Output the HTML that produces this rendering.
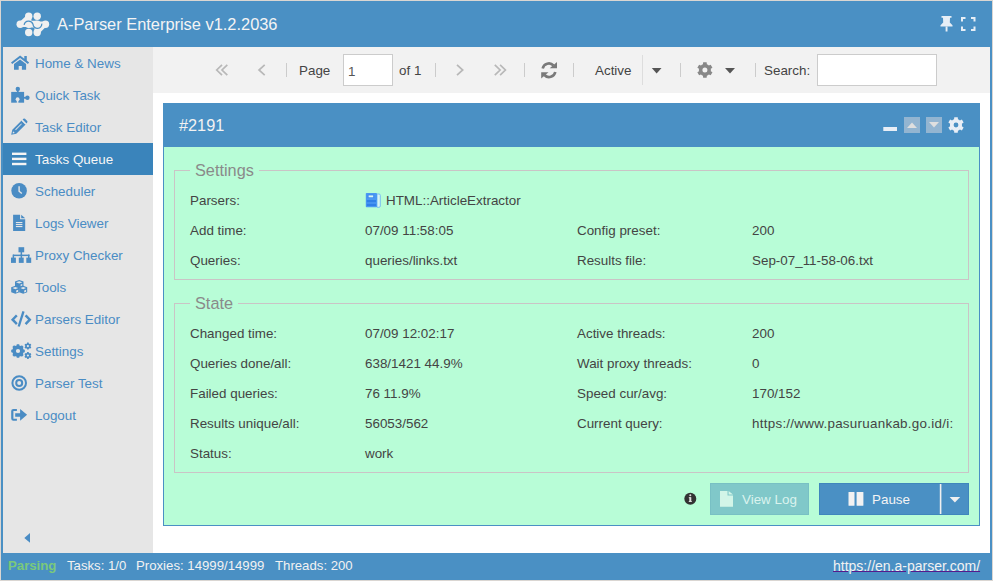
<!DOCTYPE html>
<html><head><meta charset="utf-8">
<style>
*{margin:0;padding:0;box-sizing:border-box}
html,body{width:993px;height:581px;overflow:hidden;background:#dad6d2;font-family:"Liberation Sans",sans-serif;}
.abs{position:absolute}
#win{position:absolute;left:1px;top:1px;width:991px;height:579px;background:#4a90c4;overflow:hidden}
#hdr{position:absolute;left:0;top:0;width:991px;height:46px;background:#4a90c4}
#title{position:absolute;left:56px;top:13px;font-size:16.4px;line-height:20px;color:#f4f4f4;white-space:nowrap}
#side{position:absolute;left:2px;top:46px;width:150px;height:506px;background:#e6e6e6}
.it{position:absolute;left:0;width:150px;height:32px;font-size:13.4px;line-height:32px;color:#4a8cc4;white-space:nowrap}
.it span{position:absolute;left:32px;top:1px}
.it svg{position:absolute}
.it.act{background:#3a84bb;color:#f6f6f6}
#main{position:absolute;left:152px;top:46px;width:837px;height:506px;background:#fff}
#tb{position:absolute;left:0;top:0;width:837px;height:46px;background:#f2f2f2}
.tt{position:absolute;font-size:13.4px;line-height:20px;color:#444;white-space:nowrap}
.sep{position:absolute;width:1px;background:#cfcfcf}
.inp{position:absolute;background:#fff;border:1px solid #cccccc}
#panel{position:absolute;left:10px;top:56px;width:817px;height:423px;background:#b8fdd7;border:1px solid #4a90c4;border-top:none}
#ph{position:absolute;left:-1px;top:0;width:817px;height:44px;background:#4a90c4}
#ph .num{position:absolute;left:16px;top:12px;font-size:16.3px;line-height:20px;color:#f2f2f2}
.fs{position:absolute;border:1px solid #cac4c6}
.lg{position:absolute;font-size:16.3px;line-height:20px;color:#8a8a8a;background:#b8fdd7;padding:0 5px;white-space:nowrap}
.btn{position:absolute}
.btn span{position:absolute;top:6px;font-size:13.4px;line-height:20px;white-space:nowrap}
.r{position:absolute;font-size:13.4px;line-height:30px;color:#444;white-space:nowrap}
#status{position:absolute;left:0;top:552px;width:991px;height:27px;background:#4a90c4}
.st{position:absolute;top:-1px;font-size:13.2px;line-height:27px;color:#f2f2f2;white-space:nowrap}
</style></head><body>
<div id="win">
  <div id="hdr">
        <div id="title">A-Parser Enterprise v1.2.2036</div>
  </div>
  <div id="side">
    <div class="it" style="top:0"><span>Home &amp; News</span></div>
    <div class="it" style="top:32px"><span>Quick Task</span></div>
    <div class="it" style="top:64px"><span>Task Editor</span></div>
    <div class="it act" style="top:96px"><span>Tasks Queue</span></div>
    <div class="it" style="top:128px"><span>Scheduler</span></div>
    <div class="it" style="top:160px"><span>Logs Viewer</span></div>
    <div class="it" style="top:192px"><span>Proxy Checker</span></div>
    <div class="it" style="top:224px"><span>Tools</span></div>
    <div class="it" style="top:256px"><span>Parsers Editor</span></div>
    <div class="it" style="top:288px"><span>Settings</span></div>
    <div class="it" style="top:320px"><span>Parser Test</span></div>
    <div class="it" style="top:352px"><span>Logout</span></div>
  </div>
  <div id="main">
    <div id="tb">
      <div class="tt" style="left:146px;top:14px">Page</div>
      <div class="inp" style="left:190px;top:7px;width:50px;height:32px"></div>
      <div class="tt" style="left:195px;top:15px;color:#555">1</div>
      <div class="tt" style="left:246px;top:14px">of 1</div>
      <div class="tt" style="left:442px;top:14px">Active</div>
      <div class="tt" style="left:611px;top:14px">Search:</div>
      <div class="inp" style="left:664px;top:7px;width:120px;height:32px"></div>
    </div>
    <div id="panel">
      <div id="ph"><div class="num">#2191</div></div>
      <div class="fs" style="left:10px;top:67px;width:795px;height:110px"></div>
      <div class="lg" style="left:26px;top:57px">Settings</div>
      <div class="r" style="left:26px;top:83px">Parsers:</div>
      <div class="r" style="left:222px;top:83px">HTML::ArticleExtractor</div>
      <div class="r" style="left:26px;top:113px">Add time:</div>
      <div class="r" style="left:201px;top:113px">07/09 11:58:05</div>
      <div class="r" style="left:413px;top:113px">Config preset:</div>
      <div class="r" style="left:588px;top:113px">200</div>
      <div class="r" style="left:26px;top:143px">Queries:</div>
      <div class="r" style="left:201px;top:143px">queries/links.txt</div>
      <div class="r" style="left:413px;top:143px">Results file:</div>
      <div class="r" style="left:588px;top:143px">Sep-07_11-58-06.txt</div>

      <div class="fs" style="left:10px;top:200px;width:795px;height:170px"></div>
      <div class="lg" style="left:26px;top:190px">State</div>
      <div class="r" style="left:26px;top:216px">Changed time:</div>
      <div class="r" style="left:201px;top:216px">07/09 12:02:17</div>
      <div class="r" style="left:413px;top:216px">Active threads:</div>
      <div class="r" style="left:588px;top:216px">200</div>
      <div class="r" style="left:26px;top:246px">Queries done/all:</div>
      <div class="r" style="left:201px;top:246px">638/1421 44.9%</div>
      <div class="r" style="left:413px;top:246px">Wait proxy threads:</div>
      <div class="r" style="left:588px;top:246px">0</div>
      <div class="r" style="left:26px;top:276px">Failed queries:</div>
      <div class="r" style="left:201px;top:276px">76 11.9%</div>
      <div class="r" style="left:413px;top:276px">Speed cur/avg:</div>
      <div class="r" style="left:588px;top:276px">170/152</div>
      <div class="r" style="left:26px;top:306px">Results unique/all:</div>
      <div class="r" style="left:201px;top:306px">56053/562</div>
      <div class="r" style="left:413px;top:306px">Current query:</div>
      <div class="r" style="left:588px;top:306px;width:201px;overflow:hidden;letter-spacing:0.27px">https://www.pasuruankab.go.id/i:</div>
      <div class="r" style="left:26px;top:336px">Status:</div>
      <div class="r" style="left:201px;top:336px">work</div>
      <div class="btn" style="left:546px;top:380px;width:99px;height:32px;background:#80c8c9;color:#daf3ee;border:1px solid #78c0c4"><span style="left:31px">View Log</span></div>
      <div class="btn" style="left:655px;top:380px;width:150px;height:32px;background:#4a90c4;color:#f4f4f4;border:1px solid #3f86bd"><span style="left:52px">Pause</span></div>
    </div>
  </div>
  <div id="status">
    <div class="st" style="left:7px;color:#7bc97b;font-weight:bold">Parsing</div>
    <div class="st" style="left:66px">Tasks: 1/0</div>
    <div class="st" style="left:135px">Proxies: 14999/14999</div>
    <div class="st" style="left:274px">Threads: 200</div>
    <div class="st" style="left:832px;top:0;font-size:14px;text-decoration:underline;text-decoration-color:#551a8b;text-underline-offset:0px">https://en.a-parser.com/</div>
  </div>
</div>
<svg id="ov" style="position:absolute;left:0;top:0;pointer-events:none" width="993" height="581" viewBox="0 0 993 581">
<!-- logo -->
<g fill="#f0f0f0" stroke="none">
<circle cx="28.7" cy="16.2" r="3.7"/><circle cx="37.2" cy="16.2" r="3.7"/>
<circle cx="20.2" cy="24.2" r="3.7"/><circle cx="28.7" cy="24.2" r="3.7"/><circle cx="37.2" cy="24.2" r="3.7"/><circle cx="45.5" cy="24.2" r="3.7"/>
<circle cx="28.7" cy="32.5" r="3.7"/><circle cx="37.2" cy="32.5" r="3.7"/>
</g>
<g stroke="#f0f0f0" fill="none" stroke-linecap="round" stroke-linejoin="round">
<path d="M28.7 16.2 L20.2 24.2 M45.5 24.2 L37.2 32.5" stroke-width="4.2"/>
<path d="M20.2 24.2 L45.5 24.2" stroke-width="5.4"/>
<path d="M28.7 16.2 L28.7 24.2 M37.2 24.2 L37.2 32.5" stroke-width="5.4"/>
</g>
<path d="M28.7 16.2 L20.2 24.2 L28.7 24.2Z M37.2 24.2 L45.5 24.2 L37.2 32.5Z M28.7 20.8 H37.2 V27.6 H28.7Z" fill="#f0f0f0"/>
<path d="M24.1 24.8 A4.6 4.6 0 0 1 33 24.2 A4.4 4.4 0 0 0 41.8 23.6" stroke="#4a90c4" stroke-width="1.25" fill="none"/>
<!-- pin -->
<g fill="#e6eef6">
<path d="M941.5 16 H951.5 V17.8 H950 L949.8 22.5 L952.5 25.2 V26.6 H940.5 V25.2 L943.2 22.5 L943 17.8 H941.5Z"/>
<rect x="945.6" y="26.5" width="1.9" height="5"/>
</g>
<g fill="none" stroke="#e6eef6" stroke-width="2">
<path d="M962 21.5 V18 H965.5 M971 18 H974.5 V21.5 M974.5 26.5 V30 H971 M965.5 30 H962 V26.5"/>
</g>
<!-- sidebar icons -->
<g fill="#4a8cc4">
<!-- home -->
<path d="M11 62.4 L20.1 55.6 L24.3 58.7 V56 H26.8 V60.6 L29.1 62.4 L27.9 63.9 L20.1 58.1 L12.2 63.9Z"/>
<path d="M14 64 L20.1 59.6 L26.1 64 V69.8 H21.9 V66 H18.7 V69.8 H14Z"/>
<!-- puzzle -->
<rect x="11.2" y="91.9" width="12.9" height="10.8"/>
<circle cx="17.8" cy="88.9" r="2.2"/><rect x="16.9" y="89" width="1.8" height="3.2"/>
<circle cx="27.4" cy="97.8" r="2.2"/><rect x="23.9" y="96.9" width="3.2" height="1.8"/>
<circle cx="17.6" cy="99.2" r="1.9" fill="#e6e6e6"/><rect x="16.8" y="99.5" width="1.6" height="3.4" fill="#e6e6e6"/>
<!-- pencil -->
<path d="M11.2 134.8 L12.3 129.8 L21.6 120.5 L25.6 124.5 L16.3 133.8Z M22.6 119.5 L23.4 118.8 Q24.2 118.2 25 118.8 L27.2 121 Q27.8 121.8 27.2 122.6 L26.5 123.4Z"/>
<!-- clock -->
<circle cx="19.1" cy="190.7" r="7.8"/>
<!-- file -->
<path d="M13.1 214.8 H20.1 V219.3 H25.2 V230.9 H13.1Z M21.2 214.8 L25.2 218.3 H21.2Z"/>
<!-- sitemap -->
<rect x="18.5" y="247.2" width="5.7" height="5.1"/>
<rect x="20.6" y="252" width="1.5" height="3.5"/>
<rect x="13" y="254.6" width="16.5" height="1.5"/>
<rect x="12.6" y="254.6" width="1.5" height="3.5"/><rect x="20.6" y="254.6" width="1.5" height="3.5"/><rect x="28" y="254.6" width="1.5" height="3.5"/>
<rect x="11" y="257.6" width="4.9" height="5.3"/><rect x="18.8" y="257.6" width="4.9" height="5.3"/><rect x="26.3" y="257.6" width="4.9" height="5.3"/>
<!-- cubes -->
<path d="M15 281.5 L19.2 280 L23.5 281.5 V286.5 L19.2 288 L15 286.5Z"/>
<path d="M11.2 287.3 L15.3 285.8 L19.5 287.3 V292.3 L15.3 293.8 L11.2 292.3Z"/>
<path d="M19.2 287.3 L23.2 285.8 L27.2 287.3 V292.3 L23.2 293.8 L19.2 292.3Z"/>
<!-- code -->
<path d="M16 316.2 L12.6 319.7 L16 323.2 M26.4 316.2 L29.8 319.7 L26.4 323.2" stroke="#4a8cc4" stroke-width="2.4" fill="none" stroke-linecap="square"/>
<path d="M22.4 311.1 L24.6 311.7 L19.8 326.8 L17.6 326.2Z"/>
<!-- cogs -->
<path fill-rule="evenodd" d="M16.61 345.47 L16.75 344.21 L19.25 344.21 L19.39 345.47 A5.7 5.7 0 0 1 20.93 346.11 L21.92 345.32 L23.68 347.08 L22.89 348.07 A5.7 5.7 0 0 1 23.53 349.61 L24.79 349.75 L24.79 352.25 L23.53 352.39 A5.7 5.7 0 0 1 22.89 353.93 L23.68 354.92 L21.92 356.68 L20.93 355.89 A5.7 5.7 0 0 1 19.39 356.53 L19.25 357.79 L16.75 357.79 L16.61 356.53 A5.7 5.7 0 0 1 15.07 355.89 L14.08 356.68 L12.32 354.92 L13.11 353.93 A5.7 5.7 0 0 1 12.47 352.39 L11.21 352.25 L11.21 349.75 L12.47 349.61 A5.7 5.7 0 0 1 13.11 348.07 L12.32 347.08 L14.08 345.32 L15.07 346.11 A5.7 5.7 0 0 1 16.61 345.47Z M20.10 351.00 A2.1 2.1 0 1 0 15.90 351.00 A2.1 2.1 0 1 0 20.10 351.00Z"/>
<path fill-rule="evenodd" d="M27.02 343.44 L27.11 342.59 L28.69 342.59 L28.78 343.44 A2.8 2.8 0 0 1 29.76 344.01 L30.55 343.66 L31.34 345.03 L30.64 345.53 A2.8 2.8 0 0 1 30.64 346.67 L31.34 347.17 L30.55 348.54 L29.76 348.19 A2.8 2.8 0 0 1 28.78 348.76 L28.69 349.61 L27.11 349.61 L27.02 348.76 A2.8 2.8 0 0 1 26.04 348.19 L25.25 348.54 L24.46 347.17 L25.16 346.67 A2.8 2.8 0 0 1 25.16 345.53 L24.46 345.03 L25.25 343.66 L26.04 344.01 A2.8 2.8 0 0 1 27.02 343.44Z M29.00 346.10 A1.1 1.1 0 1 0 26.80 346.10 A1.1 1.1 0 1 0 29.00 346.10Z"/>
<path fill-rule="evenodd" d="M27.02 352.84 L27.11 351.99 L28.69 351.99 L28.78 352.84 A2.8 2.8 0 0 1 29.76 353.41 L30.55 353.06 L31.34 354.43 L30.64 354.93 A2.8 2.8 0 0 1 30.64 356.07 L31.34 356.57 L30.55 357.94 L29.76 357.59 A2.8 2.8 0 0 1 28.78 358.16 L28.69 359.01 L27.11 359.01 L27.02 358.16 A2.8 2.8 0 0 1 26.04 357.59 L25.25 357.94 L24.46 356.57 L25.16 356.07 A2.8 2.8 0 0 1 25.16 354.93 L24.46 354.43 L25.25 353.06 L26.04 353.41 A2.8 2.8 0 0 1 27.02 352.84Z M29.00 355.50 A1.1 1.1 0 1 0 26.80 355.50 A1.1 1.1 0 1 0 29.00 355.50Z"/>
<!-- sign in -->
<path d="M13.4 408.9 H16.9 V410.9 H13.4 V418.7 H16.9 V420.7 H13.4 Q11.2 420.7 11.2 418.5 V411.1 Q11.2 408.9 13.4 408.9Z"/>
<path d="M15.2 413.3 H20.1 V408.9 L27.1 414.8 L20.1 420.7 V416.7 H15.2Z"/>
<!-- collapse arrow -->
<path d="M24.3 537.9 L30 533 V542.7Z"/>
</g>
<g fill="none" stroke="#e6e6e6" stroke-width="1.4">
<path d="M19.1 186.2 V191.2 L21.8 193.5"/>
</g>
<g fill="none" stroke="#4a8cc4" stroke-width="2">
<circle cx="19.2" cy="383" r="6.8"/><circle cx="19.2" cy="383" r="3"/>
</g>
<g fill="#e6e6e6">
<rect x="15.9" y="222" width="6.5" height="1.1"/><rect x="15.9" y="224" width="6.5" height="1.1"/><rect x="15.9" y="226" width="6.5" height="1.1"/>
<path d="M16 282.2 L19.2 281.2 L22.4 282.2 L19.2 283.4Z"/>
<path d="M20.6 284.6 L22.3 284 V285.6 L20.6 286.2Z"/>
<path d="M12.4 288 L15.3 287 L18.2 288 L15.3 289.2Z M16.2 290.4 L18.2 289.7 V291.7 L16.2 292.4Z"/>
<path d="M20.4 288 L23.2 287 L26 288 L23.2 289.2Z M24.2 290.4 L26.1 289.7 V291.7 L24.2 292.4Z"/>
<path d="M22 120.2 L25.9 124.1 L25.4 124.6 L21.5 120.7Z"/>
<path d="M15.2 129.6 L21.3 123.5 L21.9 124.1 L15.8 130.2Z"/>
<path d="M13 131.2 L14.8 133 L12.7 133.5Z"/>
</g>
<!-- bars (active) -->
<g fill="#f4f4f4">
<rect x="12" y="152.6" width="14.4" height="2.4"/><rect x="12" y="157.7" width="14.4" height="2.4"/><rect x="12" y="162.8" width="14.4" height="2.4"/>
</g>
<!-- toolbar -->
<g fill="none" stroke="#b8b8b8" stroke-width="1.7">
<path d="M222 64.8 L216.7 70 L222 75.2 M227.3 64.8 L222 70 L227.3 75.2"/>
<path d="M264.7 64.8 L259 70 L264.7 75.2"/>
<path d="M457 64.8 L462.7 70 L457 75.2"/>
<path d="M494.8 64.8 L500.1 70 L494.8 75.2 M500.1 64.8 L505.4 70 L500.1 75.2"/>
</g>
<g fill="#cccccc">
<rect x="286" y="63" width="1" height="14"/><rect x="435" y="63" width="1" height="14"/><rect x="524" y="63" width="1" height="14"/>
<rect x="573" y="63" width="1" height="14"/><rect x="680" y="63" width="1" height="14"/><rect x="755" y="63" width="1" height="14"/>
</g>
<rect x="642" y="55" width="1" height="30" fill="#dddddd"/>
<g fill="none" stroke="#7a7a7a" stroke-width="2.6">
<path d="M542.7 68.5 A6.3 6.3 0 0 1 553.5 65.5"/>
<path d="M555.3 72 A6.3 6.3 0 0 1 544.5 75"/>
</g>
<g fill="#7a7a7a">
<path d="M549.7 68.3 H557 V61.9Z"/>
<path d="M548.5 72.2 H541.2 V78.5Z"/>
</g>
<path fill-rule="evenodd" fill="#888888" d="M702.95 64.32 L703.15 62.30 L706.65 62.30 L706.85 64.32 A6.0 6.0 0 0 1 708.84 65.48 L710.69 64.63 L712.45 67.67 L710.79 68.85 A6.0 6.0 0 0 1 710.79 71.15 L712.45 72.33 L710.69 75.37 L708.84 74.52 A6.0 6.0 0 0 1 706.85 75.68 L706.65 77.70 L703.15 77.70 L702.95 75.68 A6.0 6.0 0 0 1 700.96 74.52 L699.11 75.37 L697.35 72.33 L699.01 71.15 A6.0 6.0 0 0 1 699.01 68.85 L697.35 67.67 L699.11 64.63 L700.96 65.48 A6.0 6.0 0 0 1 702.95 64.32Z M707.40 70.00 A2.5 2.5 0 1 0 702.40 70.00 A2.5 2.5 0 1 0 707.40 70.00Z"/>
<g fill="#555">
<path d="M651.8 68 H661.5 L656.65 73.4Z"/>
<path d="M725 68 H735 L730 73.4Z"/>
</g>
<!-- panel header -->
<rect x="883.3" y="127" width="13.7" height="4" fill="#e8eef6"/>
<rect x="904" y="117" width="16" height="16" fill="#93b5d1"/>
<rect x="926" y="117" width="16" height="16" fill="#93b5d1"/>
<path d="M907 128 H917 L912 122.5Z" fill="#dfdfdf"/>
<path d="M929 122 H939 L934 127.5Z" fill="#dfdfdf"/>
<path fill-rule="evenodd" fill="#e8eef6" d="M954.05 119.32 L954.25 117.19 L957.75 117.19 L957.95 119.32 A6.0 6.0 0 0 1 959.94 120.48 L961.88 119.58 L963.64 122.62 L961.89 123.85 A6.0 6.0 0 0 1 961.89 126.15 L963.64 127.38 L961.88 130.42 L959.94 129.52 A6.0 6.0 0 0 1 957.95 130.68 L957.75 132.81 L954.25 132.81 L954.05 130.68 A6.0 6.0 0 0 1 952.06 129.52 L950.12 130.42 L948.36 127.38 L950.11 126.15 A6.0 6.0 0 0 1 950.11 123.85 L948.36 122.62 L950.12 119.58 L952.06 120.48 A6.0 6.0 0 0 1 954.05 119.32Z M958.40 125.00 A2.4 2.4 0 1 0 953.60 125.00 A2.4 2.4 0 1 0 958.40 125.00Z"/>
<!-- parser book icon -->
<path d="M377 194 H379 Q380.3 194 380.3 195.3 V206 Q380.3 207.3 379 207.3 H377Z" fill="#d8f4f4" stroke="#78bff0" stroke-width="1"/>
<rect x="365.8" y="193" width="11.2" height="14.2" rx="0.8" fill="#4a98f2"/>
<rect x="366.8" y="200" width="9.2" height="2.2" fill="#2f7fe8"/>
<rect x="366.8" y="203.8" width="9.2" height="2.2" fill="#2f7fe8"/>
<rect x="367.6" y="194.6" width="6.6" height="3.4" fill="#3a88f0"/>
<rect x="368.6" y="195.4" width="4.6" height="1.9" fill="#d8f6f0"/>
<!-- info -->
<circle cx="690.3" cy="498.7" r="6" fill="#333"/>
<rect x="689.3" y="497.2" width="2" height="4.5" fill="#ddd"/><rect x="688.8" y="501" width="3" height="1" fill="#ddd"/><rect x="688.8" y="497.2" width="2" height="1" fill="#ddd"/>
<circle cx="690.3" cy="495.2" r="1" fill="#ddd"/>
<!-- view log file icon -->
<path d="M720 491 H727.5 V495.5 H733 V506.7 H720Z M728.6 491 L733 494.5 H728.6Z" fill="#d2f5e8"/>
<!-- pause -->
<rect x="848.5" y="492" width="6" height="13.8" fill="#f2f2f2" rx="0.6"/>
<rect x="856.6" y="492" width="6.8" height="13.8" fill="#f2f2f2" rx="0.6"/>
<rect x="939.8" y="484" width="1.6" height="30" fill="#f0f0f0"/>
<path d="M949.6 497 H960.2 L954.9 502.6Z" fill="#f0f0f0"/>
</svg>

</body></html>
